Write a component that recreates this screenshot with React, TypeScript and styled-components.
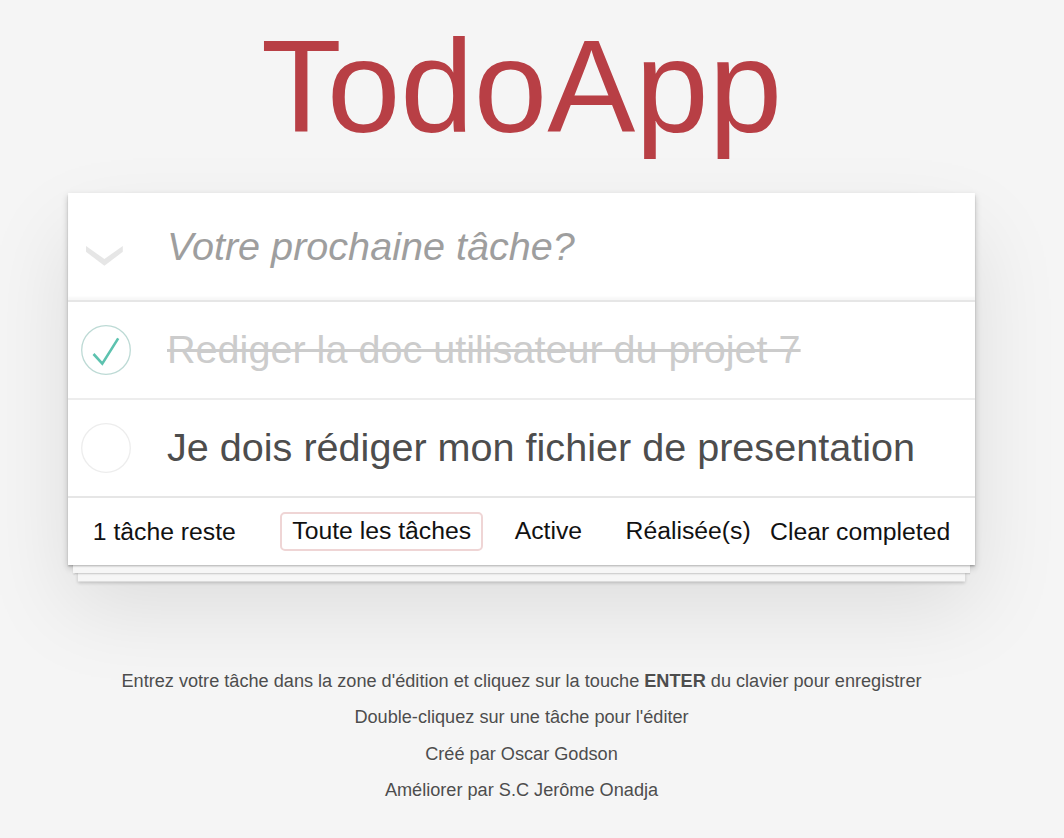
import styled, { createGlobalStyle } from 'styled-components';

interface Todo {
  readonly id: number;
  readonly title: string;
  readonly completed: boolean;
}

const todos: Todo[] = [
  { id: 1, title: 'Rediger la doc utilisateur du projet 7', completed: true },
  { id: 2, title: 'Je dois rédiger mon fichier de presentation', completed: false },
];

const GlobalStyle = createGlobalStyle`
  body {
    margin: 0;
    background: #f5f5f5;
    color: #4d4d4d;
    font-family: "Liberation Sans", Arial, Helvetica, sans-serif;
    -webkit-font-smoothing: antialiased;
  }
`;

const Page = styled.div`
  width: 1043px;
  display: flex;
  flex-direction: column;
  align-items: center;
`;

const Title = styled.h1`
  margin: 11px 0 30px;
  font-size: 132px;
  line-height: 152px;
  font-weight: 400;
  color: #b83f45;
`;

const Card = styled.section`
  width: 907px;
  background: #fff;
  box-shadow:
    0 1.65px 1.65px rgba(0, 0, 0, 0.2),
    0 13.2px 0 -4.95px #f6f6f6,
    0 14.85px 1.65px -4.95px rgba(0, 0, 0, 0.2),
    0 26.4px 0 -9.9px #f6f6f6,
    0 28px 3.3px -9.9px rgba(0, 0, 0, 0.2),
    0 3.3px 6.6px 0 rgba(0, 0, 0, 0.2),
    0 41px 82px 0 rgba(0, 0, 0, 0.1);
`;

const InputRow = styled.header`
  display: flex;
  align-items: center;
  height: 107px;
  border-bottom: 2px solid #e6e6e6;
  box-shadow: inset 0 -3px 2px rgba(0, 0, 0, 0.03);
`;

const ToggleCell = styled.div`
  width: 99px;
  flex-shrink: 0;
  box-sizing: border-box;
  padding: 19px 0 0 18px;
  display: flex;
`;

const NewTodo = styled.input`
  flex: 1;
  border: none;
  outline: none;
  padding: 0;
  margin-right: 24px;
  background: transparent;
  font-family: inherit;
  font-size: 39.6px;
  line-height: 1.2;
  color: #4d4d4d;

  &::placeholder {
    font-style: italic;
    color: #9e9e9e;
  }
`;

const List = styled.ul`
  margin: 0;
  padding: 0;
  list-style: none;
`;

const Item = styled.li`
  display: flex;
  align-items: center;
  height: 96px;
  padding-left: 13px;
  border-bottom: 2px solid #ededed;

  &:last-child {
    border-bottom: none;
  }
`;

const Label = styled.label<{ $done: boolean }>`
  margin-left: 36px;
  font-size: 39.6px;
  line-height: 1.2;
  white-space: nowrap;
  color: ${({ $done }) => ($done ? '#cccccc' : '#4d4d4d')};
  text-decoration: ${({ $done }) => ($done ? 'line-through' : 'none')};
`;

const Footer = styled.footer`
  display: grid;
  grid-template-columns: 1fr auto 1fr;
  align-items: center;
  height: 67px;
  padding: 0 24.75px;
  border-top: 2px solid #e6e6e6;
  font-size: 24.75px;
  color: #111;
`;

const Count = styled.span`
  justify-self: start;
`;

const Filters = styled.ul`
  display: flex;
  gap: 19.5px;
  margin: 0;
  padding: 0;
  list-style: none;
`;

const FilterLink = styled.a<{ $selected?: boolean }>`
  display: inline-block;
  padding: 3.5px 10px;
  line-height: 1.15;
  border: 2px solid ${({ $selected }) => ($selected ? 'rgba(175, 47, 47, 0.2)' : 'transparent')};
  border-radius: 5px;
  color: inherit;
  text-decoration: none;
`;

const ClearButton = styled.button`
  justify-self: end;
  border: none;
  background: none;
  padding: 0;
  font: inherit;
  color: inherit;
`;

const Info = styled.footer`
  margin-top: 107px;
  text-align: center;
  font-size: 18.15px;
  color: #4d4d4d;
  text-shadow: 0 1px 0 rgba(255, 255, 255, 0.5);

  p {
    margin: 0 0 18.15px;
    line-height: 1;
  }
`;

const Chevron = () => (
  <svg width="37" height="20" viewBox="0 0 37 20">
    <polygon points="0,0 18.4,13 36.8,0 36.8,5.8 18.4,19.8 0,5.8" fill="#e6e6e6" />
  </svg>
);

const Check = ({ done }: { done: boolean }) => (
  <svg width="50" height="50" viewBox="0 0 50 50">
    <circle cx="25" cy="25" r="24.3" fill="none" stroke={done ? '#bddad5' : '#ededed'} strokeWidth="1.3" />
    {done && (
      <polyline
        points="12.5,29 21.3,38.6 37.2,13.4"
        fill="none"
        stroke="#5dc2af"
        strokeWidth="2.6"
      />
    )}
  </svg>
);

const filters = ['Toute les tâches', 'Active', 'Réalisée(s)'];

export default function App() {
  const remaining = todos.filter((t) => !t.completed).length;

  return (
    <>
      <GlobalStyle />
      <Page>
        <Title>TodoApp</Title>
        <Card>
          <InputRow>
            <ToggleCell>
              <Chevron />
            </ToggleCell>
            <NewTodo placeholder="Votre prochaine tâche?" />
          </InputRow>
          <List>
            {todos.map((todo) => (
              <Item key={todo.id}>
                <Check done={todo.completed} />
                <Label $done={todo.completed}>{todo.title}</Label>
              </Item>
            ))}
          </List>
          <Footer>
            <Count>{remaining} tâche reste</Count>
            <Filters>
              {filters.map((f, i) => (
                <li key={f}>
                  <FilterLink href="#" $selected={i === 0}>
                    {f}
                  </FilterLink>
                </li>
              ))}
            </Filters>
            <ClearButton>Clear completed</ClearButton>
          </Footer>
        </Card>
        <Info>
          <p>
            Entrez votre tâche dans la zone d'édition et cliquez sur la touche <strong>ENTER</strong> du
            clavier pour enregistrer
          </p>
          <p>Double-cliquez sur une tâche pour l'éditer</p>
          <p>Créé par Oscar Godson</p>
          <p>Améliorer par S.C Jerôme Onadja</p>
        </Info>
      </Page>
    </>
  );
}
